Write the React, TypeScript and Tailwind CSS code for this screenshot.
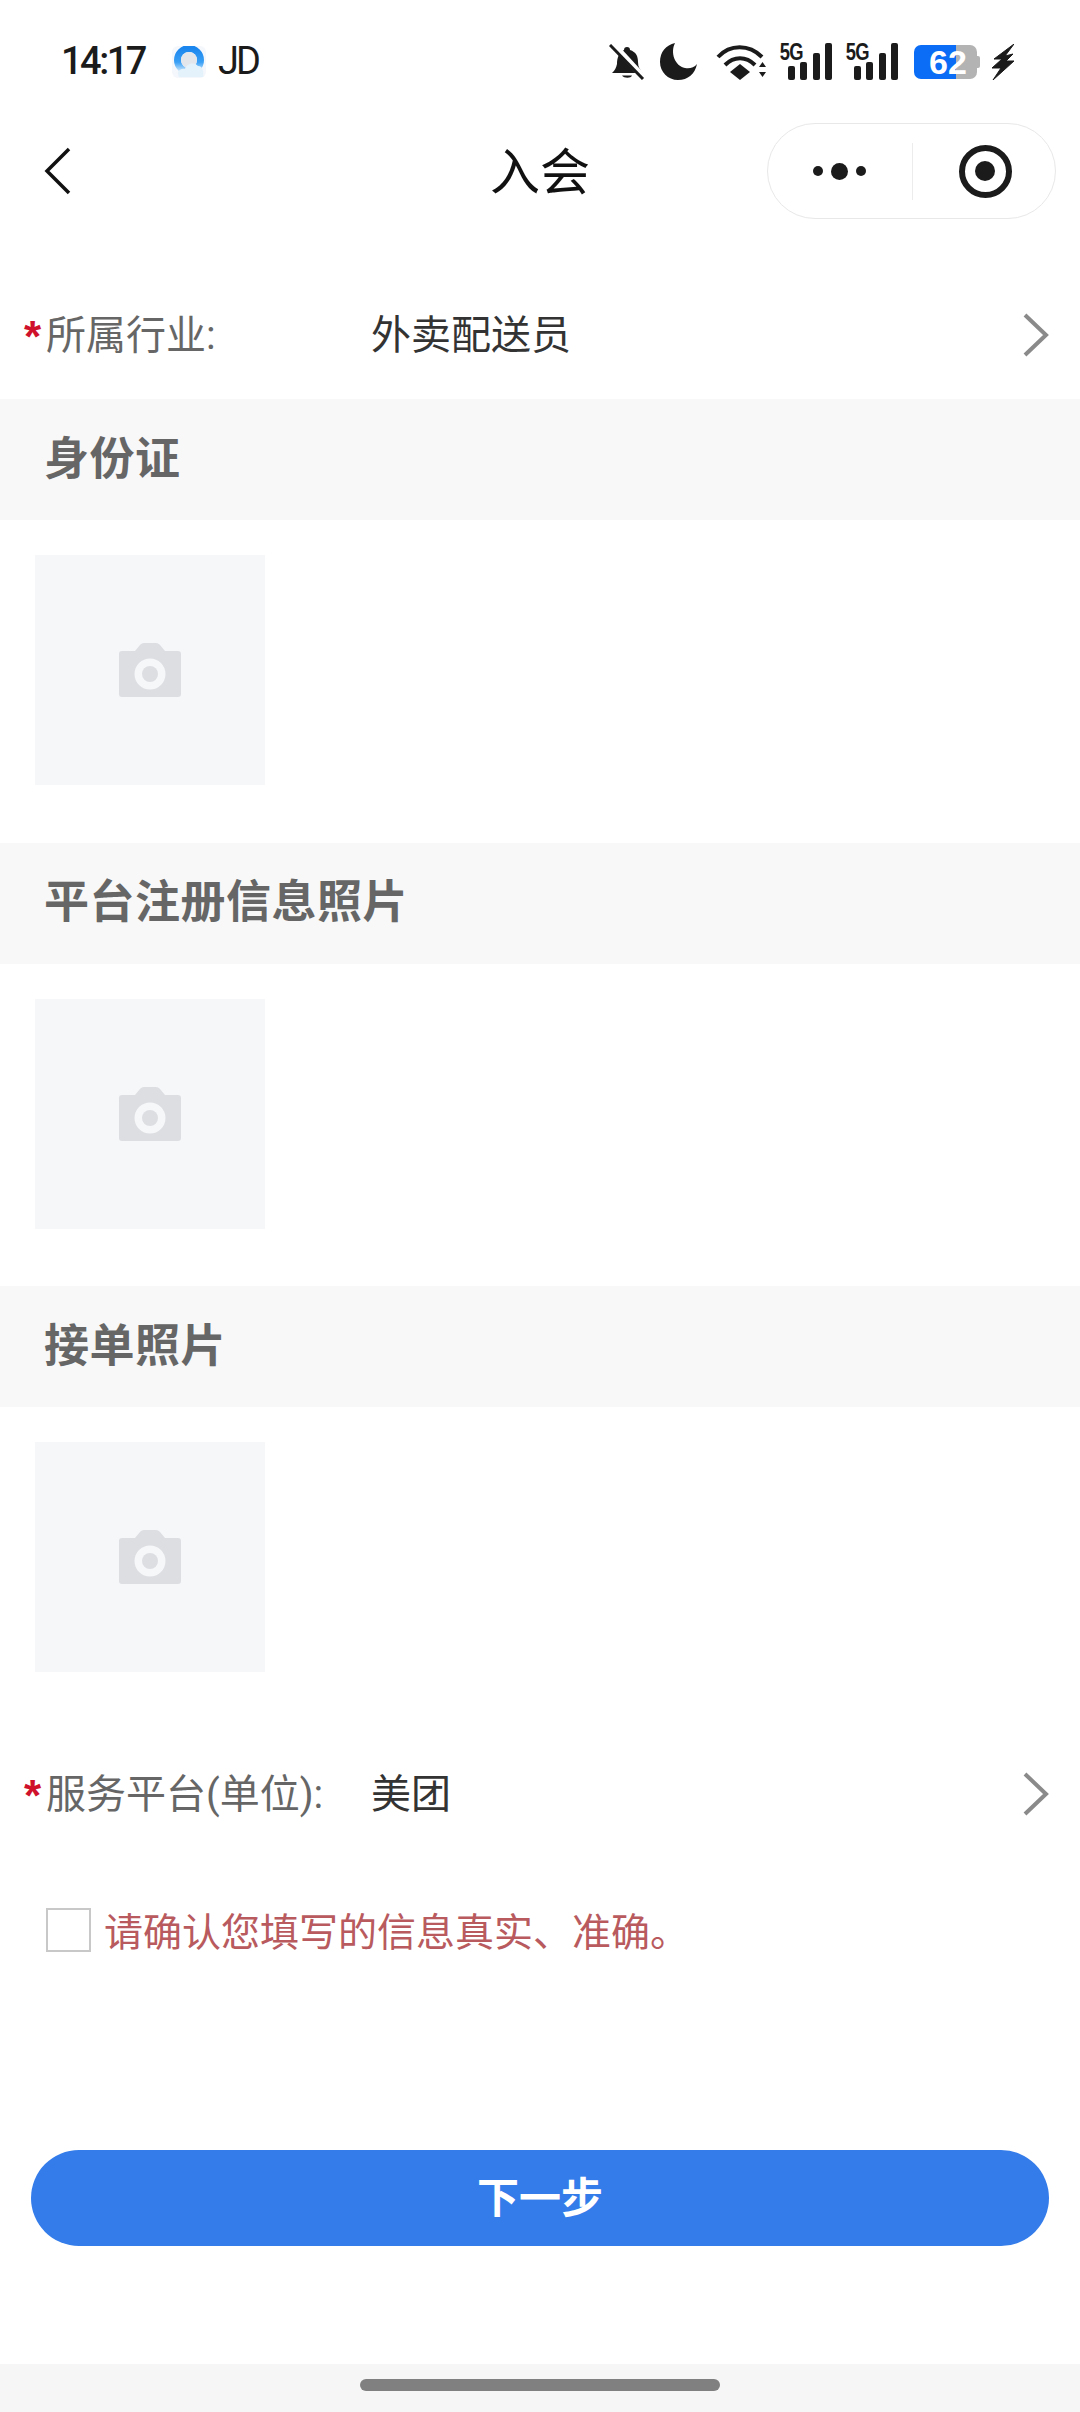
import React from 'react';

const FONT = "font-['Roboto','Noto_Sans_CJK_SC',sans-serif]";

const MiniLogo = () => (
  <svg width="34" height="32" viewBox="0 0 34 32" className="ml-[27px]">
    <defs>
      <linearGradient id="ring" x1="0" y1="0" x2="0" y2="1">
        <stop offset="0" stopColor="#1b86ee" />
        <stop offset="0.6" stopColor="#3aa0f5" />
        <stop offset="1" stopColor="#cfe8fb" />
      </linearGradient>
    </defs>
    <rect x="0" y="0" width="34" height="32" rx="6" fill="#f4f7fb" />
    <circle cx="17" cy="14" r="11.500" fill="none" stroke="url(#ring)" strokeWidth="7" />
    <circle cx="17" cy="14" r="8" fill="#e3e7ec" />
    <path d="M7 31c-3-5 1-9 6-8 1-5 9-8 13-3 5 0 6 6 5 11z" fill="#e4f2fc" />
  </svg>
);

const BellOff = () => (
  <svg width="36" height="36" viewBox="0 0 36 36">
    <path d="M18 3c2 0 3 1 3 3 6 2 8 6 8 12 0 5 2 8 5 11H3c3-3 4-5 5-9 0-6 2-12 7-14 0-2 1-3 3-3z" fill="#1b1b1b" />
    <path d="M13 31.500h10c-1 3-8 3-10 0z" fill="#1b1b1b" />
    <path d="M4 0l32 35" stroke="#fff" strokeWidth="6" />
    <path d="M1 1l33 34" stroke="#1b1b1b" strokeWidth="3" />
  </svg>
);

const Moon = () => (
  <svg width="37" height="37" viewBox="0 0 37 37">
    <path d="M15 0C6 2 0 9 0 19c0 10 8 18 18 18 10 0 17-6 19-16-3 4-8 5-12 4C15 23 10 10 15 0z" fill="#1b1b1b" />
  </svg>
);

const Wifi = () => (
  <svg width="51" height="37" viewBox="0 0 51 37" fill="none">
    <path d="M2 14C14 1 33 1 46 14" stroke="#1b1b1b" strokeWidth="4" />
    <path d="M9 22c9-9 21-9 30 0" stroke="#1b1b1b" strokeWidth="4" />
    <path d="M24 21l10 8-10 8-10-8z" fill="#1b1b1b" />
    <path d="M43 24h7l-3.500-5zM43 29h7l-3.500 5z" fill="#1b1b1b" />
  </svg>
);

// 5G label plus the four signal bars
const Signal = ({ className = '' }: { className?: string }) => (
  <div className={`relative w-[52px] h-[37px] ${className}`}>
    <span className="absolute left-[-3px] top-[-3px] text-[23px] leading-[24px] font-bold font-['Liberation_Sans',sans-serif] tracking-[-1px] scale-x-[0.8] text-[#1b1b1b]">
      5G
    </span>
    <div className="absolute right-0 bottom-0 flex items-end gap-[5.500px]">
      <div className="w-[7px] h-[14px] rounded-[2px] bg-[#1b1b1b]" />
      <div className="w-[7px] h-[18px] rounded-[2px] bg-[#1b1b1b]" />
      <div className="w-[7px] h-[27px] rounded-[2px] bg-[#1b1b1b]" />
      <div className="w-[7px] h-[37px] rounded-[2px] bg-[#1b1b1b]" />
    </div>
  </div>
);

const Battery = () => (
  <div className="relative flex items-center w-[66px] h-[34px] ml-[16px]">
    <div className="flex w-[63px] h-[34px] rounded-[7px] overflow-hidden">
      <div className="w-[42px] bg-[#0b6cf5]" />
      <div className="flex-1 bg-[#b3b3b3]" />
    </div>
    <div className="w-[3px] h-[12px] rounded-r-[2px] bg-[#b3b3b3]" />
    <span className="absolute left-[15px] top-0 text-[34px] leading-[34px] font-bold font-['Liberation_Sans',sans-serif] text-white">
      62
    </span>
  </div>
);

const Bolt = () => (
  <svg width="22" height="36" viewBox="0 0 22 36" className="ml-[12px]">
    <path d="M22 0L2 15h8L0 24h9L1 36l21-19h-8l7-7-8 2z" fill="#1b1b1b" stroke="#1b1b1b" strokeWidth="1" />
  </svg>
);

const ChevronRight = () => (
  <svg width="28" height="44" viewBox="0 0 28 44" fill="none">
    <path d="M3 2l21 20L3 42" stroke="#8a8a8a" strokeWidth="4" />
  </svg>
);

const FormRow = ({ label, value }: { label: string; value: string }) => (
  <div className="flex items-center h-[128px] pl-[24px] pr-[30px]">
    <span className="w-[22px] text-[44px] leading-[48px] mt-[4px] font-bold text-[#d0112b] font-['Liberation_Sans',sans-serif]">*</span>
    <span className="w-[325px] mt-[2px] text-[40px] leading-[56px] text-[#666666]">{label}</span>
    <span className="flex-1 mt-[2px] text-[40px] leading-[56px] text-[#333333]">{value}</span>
    <ChevronRight />
  </div>
);

const PhotoSection = ({ title }: { title: string }) => (
  <section>
    <div className="flex items-center h-[121px] pl-[44px] bg-[#f8f8f8]">
      <h2 className="text-[45px] leading-[60px] font-bold tracking-[0.5px] text-[#666666]">{title}</h2>
    </div>
    <div className="pl-[35px] pt-[35px] pb-[57.500px]">
      <div className="flex items-center justify-center w-[230px] h-[230px] bg-[#f6f7f9]">
        <svg width="62" height="54" viewBox="0 0 62 54">
          <path d="M3 8h13l5-6c1-1 2-2 4-2h12c2 0 3 1 4 2l5 6h13c2 0 3 1 3 3v40c0 2-1 3-3 3H3c-2 0-3-1-3-3V11c0-2 1-3 3-3z" fill="#dcdee1" />
          <circle cx="31" cy="31" r="15.500" fill="#f6f7f9" />
          <circle cx="31" cy="31" r="8" fill="#dcdee1" />
        </svg>
      </div>
    </div>
  </section>
);

export default function App() {
  return (
    <div className={`flex flex-col w-[1080px] h-[2412px] bg-white ${FONT}`}>
      {/* Status bar */}
      <div className="flex items-start h-[123px] pt-[43px] pl-[61px]">
        <div className="flex items-center h-[37px]">
          <span className="text-[38px] leading-[37px] font-medium tracking-[-2.500px] text-[#1b1b1b]">14:17</span>
          <MiniLogo />
          <span className="ml-[12px] text-[38px] leading-[37px] tracking-[-3px] text-[#1b1b1b]">JD</span>
        </div>
        <div className="flex items-center ml-auto mr-[66px] h-[37px]">
          <BellOff />
          <div className="ml-[15px]"><Moon /></div>
          <div className="ml-[19px]"><Wifi /></div>
          <Signal className="ml-[13px]" />
          <Signal className="ml-[14px]" />
          <Battery />
          <Bolt />
        </div>
      </div>

      {/* Navigation bar */}
      <div className="relative flex items-center justify-between h-[96px] pl-[44px] pr-[24px]">
        <svg width="28" height="48" viewBox="0 0 28 48" fill="none">
          <path d="M25 2L3 24l22 22" stroke="#111111" strokeWidth="3.500" />
        </svg>
        <h1 className="absolute left-0 right-0 mt-[4px] text-center text-[50px] leading-[60px] text-[#111111]">入会</h1>
        <div className="flex items-center w-[289px] h-[96px] rounded-full border border-[#e8e8e8]">
          <div className="flex items-center justify-center gap-[8px] w-[144px] pr-[2px]">
            <div className="w-[10px] h-[10px] rounded-full bg-[#1b1b1b]" />
            <div className="w-[17px] h-[17px] rounded-full bg-[#1b1b1b]" />
            <div className="w-[10px] h-[10px] rounded-full bg-[#1b1b1b]" />
          </div>
          <div className="w-px h-[57px] bg-[#ececec]" />
          <div className="flex items-center justify-center flex-1 pl-[2px]">
            <div className="flex items-center justify-center w-[53px] h-[53px] rounded-full border-[6px] border-[#1b1b1b]">
              <div className="w-[20px] h-[20px] rounded-full bg-[#1b1b1b]" />
            </div>
          </div>
        </div>
      </div>

      <div className="mt-[52px]">
        <FormRow label="所属行业:" value="外卖配送员" />
      </div>

      <PhotoSection title="身份证" />
      <PhotoSection title="平台注册信息照片" />
      <PhotoSection title="接单照片" />

      <FormRow label="服务平台(单位):" value="美团" />

      {/* Confirmation */}
      <label className="flex items-start mt-[51.500px] pl-[46px]">
        <span className="w-[45px] h-[44px] -mt-[1px] border-2 border-[#c8c8c8] bg-white" />
        <span className="ml-[13px] text-[39px] leading-[48px] text-[#b85a5e]">请确认您填写的信息真实、准确。</span>
      </label>

      <button className="flex items-center justify-center mx-[31px] mt-[193px] h-[96px] rounded-full bg-[#337cea] text-[42px] font-bold text-white">
        下一步
      </button>

      {/* Gesture bar */}
      <div className="flex justify-center mt-auto h-[48px] pt-[15px] bg-[#f6f6f6]">
        <div className="w-[360px] h-[12px] rounded-full bg-[#808080]" />
      </div>
    </div>
  );
}
